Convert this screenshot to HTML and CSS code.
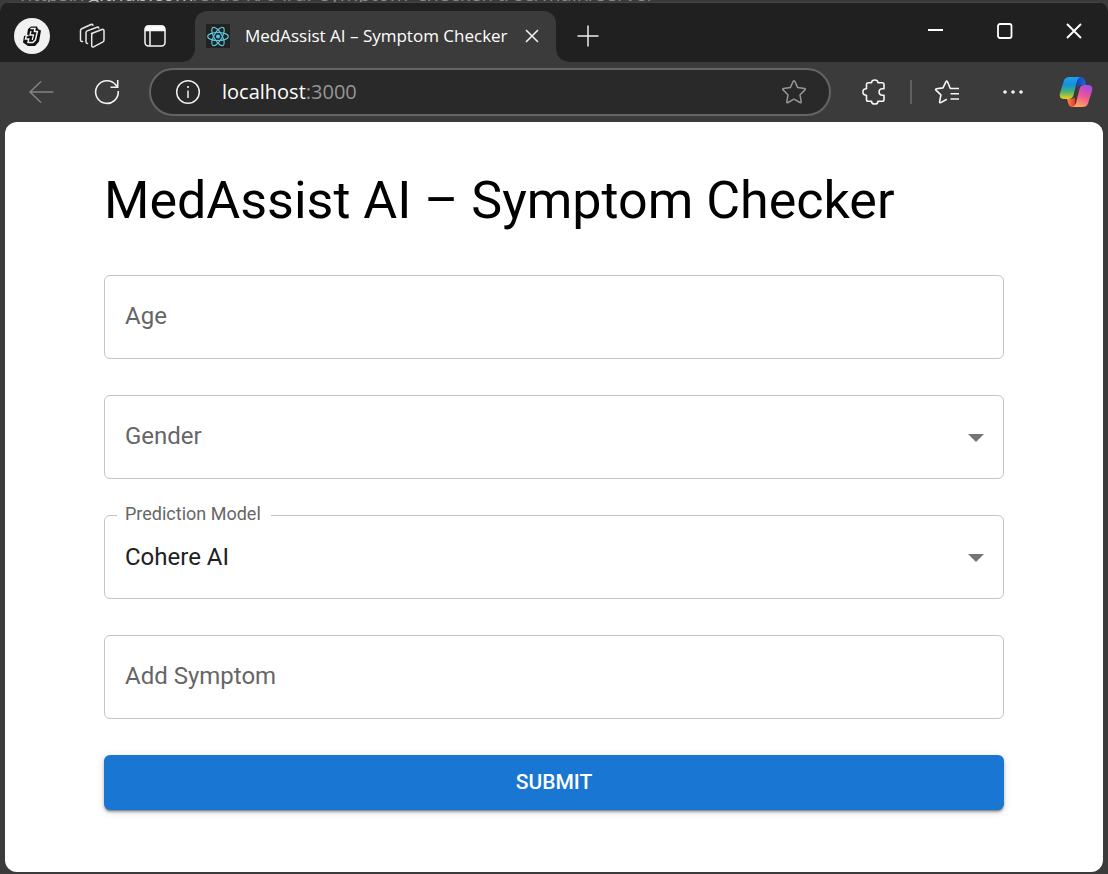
FILE: index.html
```html
<!DOCTYPE html>
<html lang="en">
<head>
<meta charset="utf-8">
<meta name="viewport" content="width=device-width, initial-scale=1">
<title>MedAssist AI – Symptom Checker</title>
<link rel="stylesheet" href="styles.css">
</head>
<body>
<div class="backdrop"><span class="backdrop-url">https://<b>github.com</b>/srac-K/04/ai_symptom_checker/tree/main/server</span></div>
<div class="window">
  <header class="titlebar">
    <button class="icon-btn profile" aria-label="Profile">
      <svg width="36" height="36" viewBox="0 0 36 36"><circle cx="18" cy="18" r="18" fill="#f1f1f1"/><path d="M17 8.500h6l1 2.500 3 1.500-2 11-4 4.500h-7l-5-3.500 1-6.500 3-1 1-6z" fill="#111"/><path d="M16.500 10.500h4.500l-.6 3h3l-2 8.500-2.500 2.500H14l.7-3.500h-3.200l.8-3.500h2.200" fill="none" stroke="#f1f1f1" stroke-width="1.500"/><path d="M17 13l-1 4h3.500l-1.300 5" fill="none" stroke="#f1f1f1" stroke-width="1.300"/></svg>
    </button>
    <button class="icon-btn workspaces" aria-label="Workspaces">
      <svg width="26" height="26" viewBox="0 0 26 26" fill="none" stroke="#e8e8e8" stroke-width="1.500" stroke-linejoin="round" stroke-linecap="round"><path d="M12.500 10.500 23 6.500q2-.6 2 1.500v9q0 1.500-1.400 2.200l-8.600 4.500q-2.300 1-2.300-1.200V12q0-1.100.8-1.500zM8.500 20.500q-1.500 0-1.500-1.700V9.700q0-1.300 1.200-1.800L18 4.200q1.400-.4 1.800.8M3.500 18.500Q1.500 18.700 1.500 17V7.500q0-1.300 1.200-1.800L12 1.500q1.500-.5 2 .8"/></svg>
    </button>
    <button class="icon-btn tab-actions" aria-label="Tab actions menu">
      <svg width="22" height="22" viewBox="0 0 22 22" fill="none" stroke="#f5f5f5" stroke-width="1.500"><rect x="1" y="1" width="20" height="20" rx="3.500"/><path d="M1.500 5.500V4q0-3 3-3h13q3 0 3 3v1.500z" fill="#fff"/><path d="M6 6v15"/></svg>
    </button>
    <div class="tab">
      <svg class="favicon" width="24" height="24" viewBox="0 0 24 24" fill="none" stroke="#58c4dc" stroke-width="1.200"><path d="M0 0h24v24H0z" fill="#222" stroke="none"/><ellipse cx="12" cy="12.500" rx="10.300" ry="4"/><ellipse cx="12" cy="12.500" rx="10.300" ry="4" transform="rotate(60 12 12.500)"/><ellipse cx="12" cy="12.500" rx="10.300" ry="4" transform="rotate(120 12 12.500)"/><circle cx="12" cy="12.500" r="2" fill="#58c4dc" stroke="none"/></svg>
      <span class="tab-title">MedAssist AI – Symptom Checker</span>
      <button class="icon-btn tab-close" aria-label="Close tab"><svg width="14" height="14" viewBox="0 0 14 14" stroke="#f0f0f0" stroke-width="1.600"><path d="M1 1l12 12M13 1 1 13"/></svg></button>
    </div>
    <button class="icon-btn new-tab" aria-label="New tab"><svg width="22" height="22" viewBox="0 0 22 22" stroke="#eee" stroke-width="1.500"><path d="M11 .5v21M.5 11h21"/></svg></button>
    <div class="window-controls">
      <button class="icon-btn" aria-label="Minimize"><svg width="16" height="16" viewBox="0 0 16 16" stroke="#fff" stroke-width="2"><path d="M0 7h15"/></svg></button>
      <button class="icon-btn" aria-label="Maximize"><svg width="16" height="16" viewBox="0 0 16 16" fill="none" stroke="#fff" stroke-width="1.800"><rect x="1" y="1" width="13.500" height="14" rx="2"/></svg></button>
      <button class="icon-btn" aria-label="Close"><svg width="16" height="16" viewBox="0 0 16 16" stroke="#fff" stroke-width="1.900"><path d="M1 1l14 14M15 1 1 15"/></svg></button>
    </div>
  </header>
  <nav class="toolbar" aria-label="Browser toolbar">
    <button class="icon-btn back" aria-label="Back"><svg width="26" height="24" viewBox="0 0 26 24" fill="none" stroke="#828282" stroke-width="1.500"><path d="M13 1.500 2 12l11 10.500M2 12h23.500"/></svg></button>
    <button class="icon-btn reload" aria-label="Refresh"><svg width="26" height="26" viewBox="0 0 26 26" fill="none" stroke="#f2f2f2" stroke-width="1.600"><path d="M24.200 12A11.300 11.300 0 1 1 21.600 5.800L23.500 8M23.700 1v7.200h-7.200"/></svg></button>
    <div class="address">
      <svg width="26" height="26" viewBox="0 0 26 26" fill="none" stroke="#eee" stroke-width="1.500"><circle cx="13" cy="13" r="11.300"/><path d="M13 11.500v7.500"/><circle cx="13" cy="8" r="1.100" fill="#eee" stroke="none"/></svg>
      <span class="url">localhost<span class="port">:3000</span></span>
      <button class="icon-btn" aria-label="Add to favorites"><svg width="26" height="26" viewBox="0 0 26 26" fill="none" stroke="#969696" stroke-width="1.500" stroke-linejoin="round"><path d="M12.200 2.300q.8-1.300 1.600 0l2.900 6.300 6.800.9q1.300.3.500 1.400l-5 4.900 1.200 6.900q.1 1.300-1.200.8L13 20.200l-6 3.300q-1.300.5-1.200-.8L7 15.800l-5-4.900q-.8-1.100.5-1.400l6.800-.9z"/></svg></button>
    </div>
    <button class="icon-btn extensions" aria-label="Extensions"><svg width="26" height="26" viewBox="0 0 26 26" fill="none" stroke="#f5f5f5" stroke-width="1.600" stroke-linejoin="round"><path d="M7 3.800h3.500C10.500 0 17 0 17 3.800h4.200q1.800 0 1.800 1.800V9.800h-1.500c-4.500 0-4.500 6.400 0 6.400H23v4.200q0 1.800-1.800 1.800H17c0 3.800-6.500 3.800-6.500 0H7.300Q5.500 22.200 5.500 20.400V16.200c-4.800 0-4.800-6.400 0-6.400V5.600Q5.500 3.800 7.300 3.800z"/></svg></button>
    <span class="divider"></span>
    <button class="icon-btn favorites" aria-label="Favorites"><svg width="26" height="26" viewBox="0 0 26 26" fill="none" stroke="#f5f5f5" stroke-width="1.600" stroke-linejoin="round"><path d="M25 9.500H16.300L13.500 2.800q-.8-1.300-1.600 0L9 8.900l-6.600.9q-1.300.3-.5 1.400l5 4.700-1.300 6.900q-.1 1.300 1.200.8l6-3.300M16.500 14.800H25M16.500 20H25"/></svg></button>
    <button class="icon-btn more" aria-label="Settings and more"><svg width="22" height="6" viewBox="0 0 22 6" fill="#f5f5f5"><circle cx="3" cy="3" r="1.800"/><circle cx="11" cy="3" r="1.800"/><circle cx="19" cy="3" r="1.800"/></svg></button>
    <button class="icon-btn copilot" aria-label="Copilot">
      <svg width="34" height="32" viewBox="0 0 34 32">
        <defs>
          <linearGradient id="cool" x1="0" y1="0" x2="0" y2="1"><stop offset="0" stop-color="#1aa5ef"/><stop offset=".35" stop-color="#1590dc"/><stop offset=".65" stop-color="#45b07a"/><stop offset="1" stop-color="#f5cf12"/></linearGradient>
          <linearGradient id="warm" x1=".7" y1="0" x2=".3" y2="1"><stop offset="0" stop-color="#a54be0"/><stop offset=".5" stop-color="#ef5694"/><stop offset="1" stop-color="#ffab59"/></linearGradient>
          <linearGradient id="blue"><stop offset="0" stop-color="#1b3fc0"/><stop offset="1" stop-color="#146fe0"/></linearGradient>
          <linearGradient id="red"><stop offset="0" stop-color="#ff8a48"/><stop offset="1" stop-color="#e8382b"/></linearGradient>
        </defs>
        <path d="M18 1h3.500q3.500 0 4.500 4l1 4h-5q-3 0-4 3.500z" fill="url(#blue)"/>
        <path d="M16 31h-2.500Q10.200 31 9.300 27.500L8 23h3.500q3.500 0 4.500-3.500z" fill="url(#red)"/>
        <path d="M10.500 1H22q-3 .5-4 4l-3.500 14q-1 4-5 4H5q-5.500 0-4-6L5 4.500Q6.200 1 10.500 1z" fill="url(#cool)"/>
        <path d="M23.500 31H13q3-.5 4-4l3.500-14q1-4 5-4H29q5.500 0 4 6l-4 12.500Q27.800 31 23.500 31z" fill="url(#warm)"/>
        <path d="M17.200 12.500 19.800 11 16.800 21.500 14.200 22z" fill="#3b3b3b"/>
      </svg>
    </button>
  </nav>
  <main class="page">
    <div class="container">
      <h1>MedAssist AI – Symptom Checker</h1>
      <form class="form">
        <div class="field"><input id="age" type="text"><label for="age">Age</label></div>
        <div class="field">
          <select id="gender"><option value="" selected></option><option>Male</option><option>Female</option></select>
          <label for="gender">Gender</label>
          <svg class="arrow" width="16" height="8" viewBox="0 0 16 8"><path d="M0 0h16L8 8z" fill="#757575"/></svg>
        </div>
        <div class="field filled">
          <select id="model"><option selected>Cohere AI</option></select>
          <label for="model">Prediction Model</label>
          <svg class="arrow" width="16" height="8" viewBox="0 0 16 8"><path d="M0 0h16L8 8z" fill="#757575"/></svg>
        </div>
        <div class="field"><input id="symptom" type="text"><label for="symptom">Add Symptom</label></div>
        <button class="submit" type="button">SUBMIT</button>
      </form>
    </div>
  </main>
</div>
</body>
</html>
```
FILE: styles.css
```css
* { box-sizing: border-box; }

body {
  margin: 0;
  min-height: 100vh;
  display: flex;
  flex-direction: column;
  background: #3b3b3b;
  font-family: Roboto, sans-serif;
}

.backdrop {
  height: 2px;
  padding-left: 20px;
  overflow: hidden;
  display: flex;
  align-items: flex-end;
  color: #8a8a8a;
  font: 20px/16px "Open Sans", sans-serif;
  white-space: nowrap;
}

.backdrop-url b { color: #c0c0c0; font-weight: 400; }

.window {
  flex: 1;
  display: flex;
  flex-direction: column;
  border-radius: 10px;
  overflow: hidden;
  background: #3b3b3b;
}

.icon-btn {
  display: flex;
  align-items: center;
  justify-content: center;
  flex: none;
  padding: 0;
  border: 0;
  background: none;
}

svg { display: block; flex: none; }

.titlebar {
  display: flex;
  align-items: center;
  height: 60px;
  padding: 8px 0 0 14px;
  background: #202020;
  border-top: 1px solid #444;
}

.titlebar > .icon-btn { margin-bottom: 2px; }

.titlebar > .workspaces { margin-left: 29px; }
.titlebar > .tab-actions { margin-left: 39px; }

.tab {
  position: relative;
  align-self: stretch;
  display: flex;
  align-items: center;
  width: 361px;
  margin-left: 29px;
  padding: 0 17px 2px 11px;
  border-radius: 12px 12px 0 0;
  background: #3b3b3b;
}

.tab::before,
.tab::after {
  content: "";
  position: absolute;
  bottom: 0;
  width: 12px;
  height: 12px;
}

.tab::before {
  right: 100%;
  background: radial-gradient(circle at 0 0, #202020 11px, #3b3b3b 12px);
}

.tab::after {
  left: 100%;
  background: radial-gradient(circle at 100% 0, #202020 11px, #3b3b3b 12px);
}

.tab-title {
  flex: 1;
  margin-left: 15px;
  color: #fff;
  font: 17px/24px "Open Sans", sans-serif;
  white-space: nowrap;
}

.new-tab { margin-left: 21px; }

.window-controls {
  display: flex;
  gap: 53px;
  margin: 0 26px 11px auto;
}

.toolbar {
  display: flex;
  align-items: center;
  height: 60px;
  padding: 0 15px 0 28px;
}

.reload { margin-left: 40px; }

.address {
  flex: 1;
  display: flex;
  align-items: center;
  height: 48px;
  margin-left: 29px;
  padding: 0 22px 0 24px;
  border: 2px solid #646464;
  border-radius: 24px;
  background: #292929;
}

.url {
  flex: 1;
  margin-left: 21px;
  color: #fff;
  font: 20px/28px "Open Sans", sans-serif;
}

.port { color: #969696; }

.extensions { margin-left: 30px; }

.divider {
  width: 2px;
  height: 24px;
  margin-left: 23px;
  background: #606060;
}

.favorites { margin-left: 22px; }
.more { margin-left: 42px; }
.copilot { margin-left: 35px; }

.page {
  flex: 1;
  margin: 0 5px 2px;
  padding: 47px 24px 62px;
  border-radius: 12px;
  background: #fff;
}

.container {
  max-width: 900px;
  margin: 0 auto;
}

h1 {
  margin: 0 0 42px;
  color: #000;
  font-size: 52px;
  font-weight: 400;
  line-height: 64px;
}

.form {
  display: flex;
  flex-direction: column;
  gap: 36px;
}

.field { position: relative; }

.field input,
.field select {
  display: block;
  width: 100%;
  height: 84px;
  padding: 0 48px 0 20px;
  border: 1px solid #c4c4c4;
  border-radius: 6px;
  background: #fff;
  color: #212121;
  font: 24px/36px Roboto, sans-serif;
  appearance: none;
}

.field label {
  position: absolute;
  top: 23px;
  left: 21px;
  color: #666;
  font-size: 24px;
  line-height: 36px;
  pointer-events: none;
}

.field.filled label {
  top: -14px;
  left: 13px;
  padding: 0 10px 0 8px;
  background: #fff;
  font-size: 18px;
  line-height: 26px;
}

.arrow {
  position: absolute;
  top: 39px;
  right: 20px;
  pointer-events: none;
}

.submit {
  height: 55px;
  padding: 0 0 2px;
  border: 0;
  border-radius: 6px;
  background: #1976d2;
  color: #fff;
  font: 500 21px/36px Roboto, sans-serif;
  box-shadow: 0 3px 2px -2px rgba(0, 0, 0, .3), 0 2px 3px rgba(0, 0, 0, .25), 0 2px 8px rgba(0, 0, 0, .12);
}
```
